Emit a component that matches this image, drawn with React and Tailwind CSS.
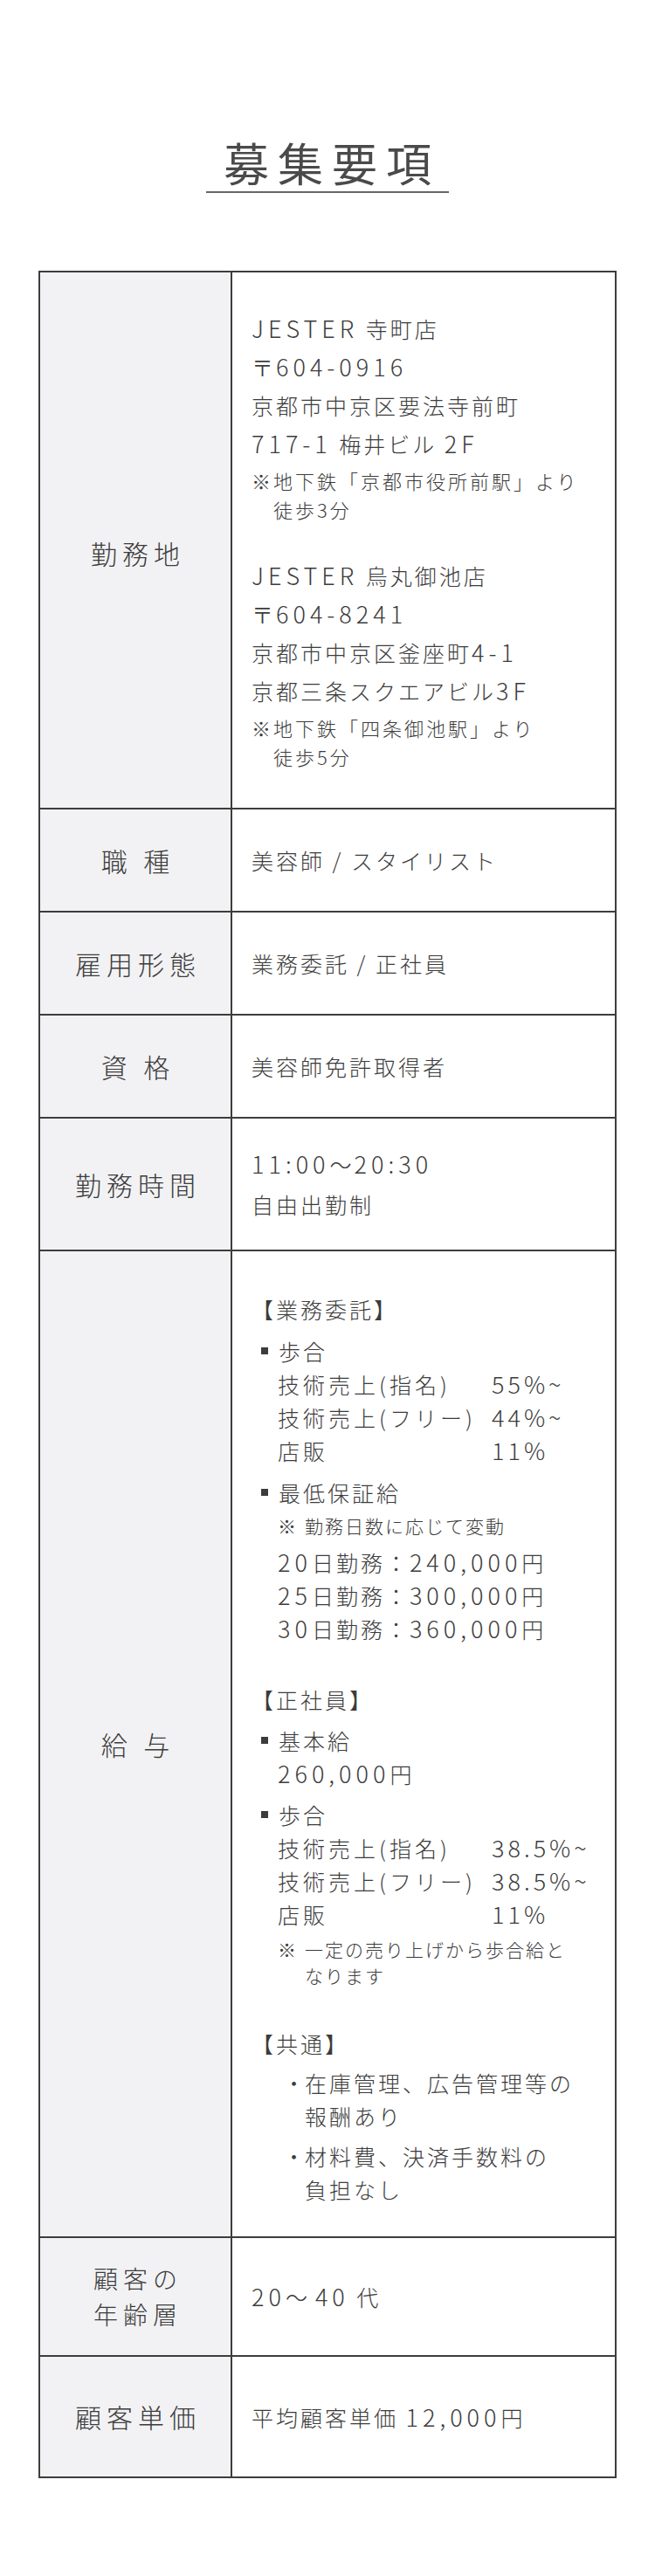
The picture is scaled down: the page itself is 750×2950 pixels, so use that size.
import React from "react";

const font = "font-['Noto_Sans_CJK_JP','Noto_Sans',sans-serif]";

// latin / number runs are set a little larger and wider, like the original's Futura-ish face
const En = ({ children }) => <span className="text-[27px] tracking-[5px]">{children}</span>;

// one table row: grey label cell + white content cell
const Row = ({ label, labelClass = "", className = "", children }) => (
  <div className={`flex ${className}`}>
    <div
      className={`w-[220px] shrink-0 bg-[#f2f2f4] border-r-2 border-[#3d3d3d] flex items-center justify-center text-center text-[30px] leading-[37px] tracking-[6px] pl-[6px] ${labelClass}`}
    >
      {label}
    </div>
    <div className="flex-1 pl-[22px] pr-[12px] flex flex-col justify-center text-[25px] leading-[44px] tracking-[3px]">
      {children}
    </div>
  </div>
);

const Note = ({ lines }) => (
  <div className="flex text-[22px] leading-[33px] tracking-[3px] mt-[4px]">
    <span>※</span>
    <div>
      {lines.map((l, i) => (
        <div key={i}>{l}</div>
      ))}
    </div>
  </div>
);

const Bullet = ({ children, className = "" }) => (
  <div className={`flex items-center ${className}`}>
    <span className="w-[8px] h-[8px] bg-[#3c3c3c] ml-[11px] mr-[12px]" />
    <span>{children}</span>
  </div>
);

const Rates = ({ rows }) => (
  <div className="pl-[30px] grid grid-cols-[245px_1fr] tracking-[4px]">
    {rows.map(([k, v], i) => (
      <React.Fragment key={i}>
        <span className="whitespace-nowrap">{k}</span>
        <span className="whitespace-nowrap">
          <span className="text-[27px] tracking-[4px]">{v}</span>
        </span>
      </React.Fragment>
    ))}
  </div>
);

const SmallNote = ({ lines, className = "" }) => (
  <div className={`pl-[30px] flex text-[21px] leading-[30px] tracking-[2px] ${className}`}>
    <span className="w-[31px] shrink-0">※</span>
    <div>
      {lines.map((l, i) => (
        <div key={i}>{l}</div>
      ))}
    </div>
  </div>
);

const Dot = ({ lines, className = "" }) => (
  <div className={`flex pl-[36px] ${className}`}>
    <span className="w-[25px] shrink-0 text-center tracking-normal">・</span>
    <div>
      {lines.map((l, i) => (
        <div key={i}>{l}</div>
      ))}
    </div>
  </div>
);

const Pay = ({ days, amount }) => (
  <div>
    <En>{days}</En>日勤務：<En>{amount}</En>円
  </div>
);

export default function App() {
  return (
    <div className={`bg-white min-h-[2950px] text-[#3c3c3c] font-light ${font}`}>
      <div className="pt-[155px] flex justify-center">
        <h1 className="inline-block text-[52px] leading-[62px] tracking-[10px] font-normal text-[#4a4a4a] pl-[20px] pr-[10px] pb-[2px] border-b-2 border-[#666]">
          募集要項
        </h1>
      </div>

      <div className="mt-[89px] mx-[44px] border-2 border-[#3d3d3d] divide-y-2 divide-[#3d3d3d]">
        <Row label="勤務地" labelClass="pt-[30px]">
          <div className="pt-[42px] pb-[42px]">
            <div>
              <En>JESTER</En> 寺町店
            </div>
            <div>
              〒<En>604-0916</En>
            </div>
            <div>京都市中京区要法寺前町</div>
            <div>
              <En>717-1</En> 梅井ビル <En>2F</En>
            </div>
            <Note lines={["地下鉄「京都市役所前駅」より", "徒歩3分"]} />
            <div className="mt-[37px]">
              <En>JESTER</En> 烏丸御池店
            </div>
            <div>
              〒<En>604-8241</En>
            </div>
            <div>
              京都市中京区釜座町<En>4-1</En>
            </div>
            <div>
              京都三条スクエアビル<En>3F</En>
            </div>
            <Note lines={["地下鉄「四条御池駅」より", "徒歩5分"]} />
          </div>
        </Row>

        <Row label="職 種" className="h-[118px]">
          <div>美容師 / スタイリスト</div>
        </Row>

        <Row label="雇用形態" className="h-[118px]">
          <div>業務委託 / 正社員</div>
        </Row>

        <Row label="資 格" className="h-[118px]">
          <div>美容師免許取得者</div>
        </Row>

        <Row label="勤務時間" className="h-[152px]">
          <div className="leading-[46px]">
            <div>
              <En>11:00</En>～<En>20:30</En>
            </div>
            <div>自由出勤制</div>
          </div>
        </Row>

        <Row label="給 与">
          <div className="pt-[47px] pb-[35px] leading-[38px]">
            <div>【業務委託】</div>
            <Bullet className="mt-[10px]">歩合</Bullet>
            <Rates
              rows={[
                ["技術売上(指名)", "55%~"],
                ["技術売上(フリー)", "44%~"],
                ["店販", "11%"],
              ]}
            />
            <Bullet className="mt-[10px]">最低保証給</Bullet>
            <SmallNote className="mt-[4px]" lines={["勤務日数に応じて変動"]} />
            <div className="pl-[30px] mt-[8px]">
              <Pay days="20" amount="240,000" />
              <Pay days="25" amount="300,000" />
              <Pay days="30" amount="360,000" />
            </div>

            <div className="mt-[43px]">【正社員】</div>
            <Bullet className="mt-[9px]">基本給</Bullet>
            <div className="pl-[30px]">
              <En>260,000</En>円
            </div>
            <Bullet className="mt-[9px]">歩合</Bullet>
            <Rates
              rows={[
                ["技術売上(指名)", "38.5%~"],
                ["技術売上(フリー)", "38.5%~"],
                ["店販", "11%"],
              ]}
            />
            <SmallNote className="mt-[6px]" lines={["一定の売り上げから歩合給と", "なります"]} />

            <div className="mt-[44px]">【共通】</div>
            <Dot className="mt-[7px]" lines={["在庫管理、広告管理等の", "報酬あり"]} />
            <Dot className="mt-[8px]" lines={["材料費、決済手数料の", "負担なし"]} />
          </div>
        </Row>

        <Row
          label={
            <div className="text-[28px] leading-[41px]">
              <div>顧客の</div>
              <div>年齢層</div>
            </div>
          }
          className="h-[136px]"
        >
          <div>
            <En>20</En>
            <span className="mr-[6px]">～</span>
            <En>40</En> 代
          </div>
        </Row>

        <Row label="顧客単価" className="h-[137px]">
          <div>
            平均顧客単価 <En>12,000</En>円
          </div>
        </Row>
      </div>
    </div>
  );
}
